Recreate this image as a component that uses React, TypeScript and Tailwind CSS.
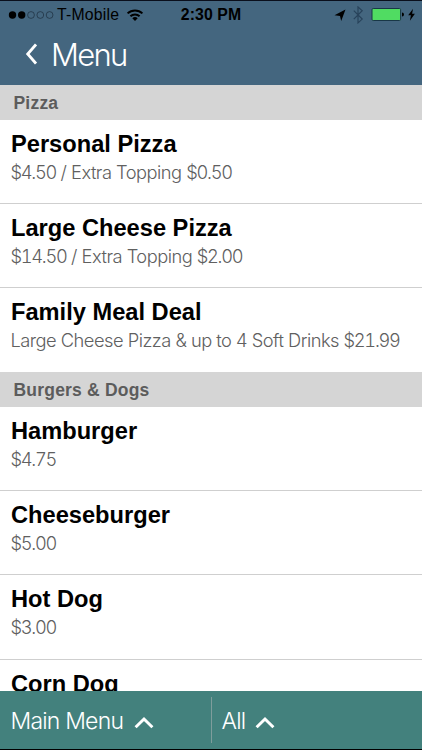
import { ReactNode } from 'react';

const light = "font-['Inter','Liberation_Sans',sans-serif] font-light";

function StatusBar() {
  return (
    <div className="relative flex h-[29px] items-center border-t border-[#0a0f1c] text-black">
      <svg className="ml-2 h-[10px] w-[46px] shrink-0" viewBox="0 0 46 10" fill="none" stroke="#1b2c3c" strokeWidth="0.7">
        <circle cx="4.5" cy="5" r="3.7" fill="#000" stroke="none" />
        <circle cx="13.7" cy="5" r="3.7" fill="#000" stroke="none" />
        <circle cx="23" cy="5" r="3.4" />
        <circle cx="32.3" cy="5" r="3.4" />
        <circle cx="41.6" cy="5" r="3.4" />
      </svg>
      <span className="ml-[3px] w-[66px] whitespace-nowrap text-[15.8px] tracking-[0.2px]">T-Mobile</span>
      <svg className="ml-[3px] h-3 w-[18px] shrink-0" viewBox="0 0 18 12" fill="none" stroke="#000" strokeWidth="2">
        <path d="M1.6 4.4a10.7 10.7 0 0 1 14.8 0M4.4 7.3a6.7 6.7 0 0 1 9.2 0" />
        <path d="M9 12 6.3 9.3a3.9 3.9 0 0 1 5.4 0Z" fill="#000" stroke="none" />
      </svg>
      <span className="absolute inset-x-0 text-center text-[15.8px] font-bold tracking-[0.1px]">2:30 PM</span>
      <svg className="ml-auto mr-[4px] h-[18px] w-[84px] shrink-0" viewBox="0 0 84 18">
        <path d="M11.5 3.5 7.2 15 6 10 .5 9.2Z" fill="#000" />
        <path d="M19.8 4.7l8.4 8.4-4.2 3.8V.9l4.2 3.8-8.4 8.4" fill="none" stroke="#28435b" strokeWidth="1.2" />
        <rect x="38" y="2.5" width="28.6" height="12" rx="1.2" fill="#50dc62" stroke="#193747" strokeWidth="1" />
        <path d="M68 6.5a2 2 0 0 1 0 4Z" fill="#000" />
        <path d="M79 2.8 74.2 9.3h2.7l-1 5.5 5-7h-2.8Z" fill="#000" />
      </svg>
    </div>
  );
}

function Section({ children }: { children: ReactNode }) {
  return (
    <h2 className="flex h-[34.5px] shrink-0 items-center bg-[#d5d5d5] pl-[13.5px] pt-[2px] text-[17.5px] font-bold tracking-[0.2px] text-[#5c5c5c]">
      {children}
    </h2>
  );
}

// Dollar amounts use tighter tabular figures than the surrounding words.
function PriceText({ text }: { text: string }) {
  return (
    <>
      {text.split(/(\$[\d.]+)/).map((part, i) =>
        part.startsWith('$') ? <span key={i} className="tabular-nums tracking-[-1.3px]">{part}</span> : part,
      )}
    </>
  );
}

function Item({ name, price, last = false }: { name: string; price?: string; last?: boolean }) {
  return (
    <div className={`h-[84.25px] shrink-0 border-b pl-[11px] pt-[10px] ${last ? 'border-transparent' : 'border-[#cfcfcf]'}`}>
      <div className="text-[23.65px] font-bold leading-[29px] text-black">{name}</div>
      {price && (
        <div className={`${light} -ml-[0.5px] whitespace-nowrap text-[18.3px] leading-[26px] tracking-[-0.51px] text-[#606060]`}>
          <PriceText text={price} />
        </div>
      )}
    </div>
  );
}

function Chevron() {
  return (
    <svg className="-ml-px mt-px h-[13px] w-5" viewBox="0 0 20 13" fill="none" stroke="#fff" strokeWidth="3">
      <path d="M1.6 11.2 10 3l8.4 8.2" />
    </svg>
  );
}

export default function App() {
  return (
    <main className="flex h-[750px] w-[422px] flex-col overflow-hidden bg-white font-['Liberation_Sans',sans-serif]">
      <header className="h-[85px] shrink-0 bg-[#44667f]">
        <StatusBar />
        <div className="flex h-[52px] items-center text-white">
          <svg className="-mt-[3px] ml-[25px] h-[22px] w-3" viewBox="0 0 12 22" fill="none" stroke="#fff" strokeWidth="2.8">
            <path d="M11 1.5 2.7 11 11 20.5" />
          </svg>
          <h1 className={`${light} ml-[14px] text-[31px] tracking-[-1.7px]`}>Menu</h1>
        </div>
      </header>
      <div className="flex min-h-0 flex-1 flex-col overflow-hidden">
        <Section>Pizza</Section>
        <Item name="Personal Pizza" price="$4.50 / Extra Topping $0.50" />
        <Item name="Large Cheese Pizza" price="$14.50 / Extra Topping $2.00" />
        <Item name="Family Meal Deal" price="Large Cheese Pizza & up to 4 Soft Drinks $21.99" last />
        <Section>Burgers &amp; Dogs</Section>
        <Item name="Hamburger" price="$4.75" />
        <Item name="Cheeseburger" price="$5.00" />
        <Item name="Hot Dog" price="$3.00" />
        <Item name="Corn Dog" />
      </div>
      <footer className={`${light} flex h-[59px] shrink-0 border-b border-black bg-[#43817d] text-[23px] text-white`}>
        <div className="my-[6px] flex w-[211.5px] items-center border-r-[1.5px] border-[#7f9d9c] pl-[10.5px] pt-[3px]">
          <span className="w-[124px] whitespace-nowrap tracking-[-0.8px]">Main Menu</span>
          <Chevron />
        </div>
        <div className="my-[6px] flex items-center pl-[10px] pt-[3px]">
          <span className="w-[34.5px] whitespace-nowrap tracking-[-0.8px]">All</span>
          <Chevron />
        </div>
      </footer>
    </main>
  );
}
